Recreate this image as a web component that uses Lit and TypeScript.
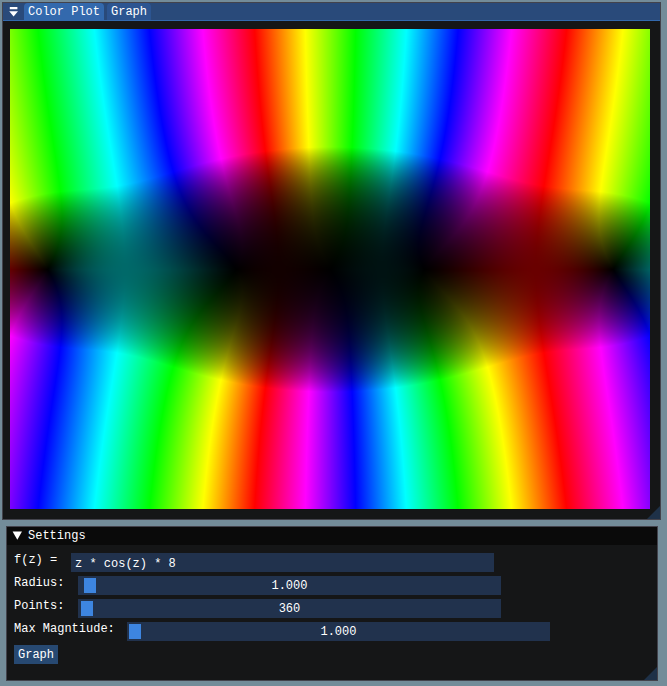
import { LitElement, html, css } from "lit";
import { customElement, property, query, state } from "lit/decorators.js";

const PLOT_WIDTH = 640;
const PLOT_HEIGHT = 480;
const PIXELS_PER_UNIT = 60;

/** Fully saturated HSV colour for a hue in [0, 6). */
function hueToRgb(h: number): [number, number, number] {
  const x = 1 - Math.abs((h % 2) - 1);
  if (h < 1) return [1, x, 0];
  if (h < 2) return [x, 1, 0];
  if (h < 3) return [0, 1, x];
  if (h < 4) return [0, x, 1];
  if (h < 5) return [x, 0, 1];
  return [1, 0, x];
}

/** Domain colouring of z * cos(z): argument as hue, magnitude as brightness. */
@customElement("color-plot")
export class ColorPlot extends LitElement {
  @property({ type: Number }) limit = 8;
  @query("canvas") canvas!: HTMLCanvasElement;

  static styles = css`
    :host {
      display: block;
    }
    .plot {
      display: block;
      width: 100%;
      height: auto;
    }
  `;

  updated() {
    const ctx = this.canvas.getContext("2d")!;
    const image = ctx.createImageData(PLOT_WIDTH, PLOT_HEIGHT);
    let i = 0;
    for (let row = 0; row < PLOT_HEIGHT; row++) {
      const y = (row - PLOT_HEIGHT / 2) / PIXELS_PER_UNIT;
      for (let col = 0; col < PLOT_WIDTH; col++) {
        const x = (col - PLOT_WIDTH / 2) / PIXELS_PER_UNIT;
        const cosRe = Math.cos(x) * Math.cosh(y);
        const cosIm = -Math.sin(x) * Math.sinh(y);
        const re = x * cosRe - y * cosIm;
        const im = x * cosIm + y * cosRe;
        const value = Math.min(1, Math.hypot(re, im) / this.limit);
        const hue = ((Math.atan2(im, re) / Math.PI) * 3 + 3) % 6;
        const [r, g, b] = hueToRgb(hue);
        image.data[i++] = r * value * 255;
        image.data[i++] = g * value * 255;
        image.data[i++] = b * value * 255;
        image.data[i++] = 255;
      }
    }
    ctx.putImageData(image, 0, 0);
  }

  render() {
    return html`<canvas
      class="plot"
      width=${PLOT_WIDTH}
      height=${PLOT_HEIGHT}
      role="img"
      aria-label="Color plot"
    ></canvas>`;
  }
}

interface Slider {
  id: string;
  label: string;
  size: string;
  max: number;
  value: number;
  digits: number;
}

@customElement("app-root")
export class AppRoot extends LitElement {
  @state() private sliders: Slider[] = [
    { id: "radius", label: "Radius:", size: "medium", max: 100, value: 1, digits: 3 },
    { id: "points", label: "Points:", size: "medium", max: 100000, value: 360, digits: 0 },
    { id: "magnitude", label: "Max Magntiude:", size: "long", max: 1000, value: 1, digits: 3 },
  ];

  static styles = css`
    :host {
      display: block;
      box-sizing: border-box;
      min-height: 100vh;
      padding: 2px 6px 5px 2px;
      background: #738c99;
      color: #fff;
      font: 12px/15px "Liberation Mono", monospace;
    }
    * {
      box-sizing: border-box;
    }
    button,
    input {
      margin: 0;
      border: 0;
      border-radius: 0;
      color: inherit;
      font: inherit;
    }
    .window {
      position: relative;
      border: 1px solid #43434c;
      background: #151617;
    }
    .window::after {
      content: "";
      position: absolute;
      right: 0;
      bottom: 0;
      width: 13px;
      height: 13px;
      background: #1e3148;
      clip-path: polygon(100% 0, 100% 100%, 0 100%);
    }
    .tabs {
      display: flex;
      gap: 3px;
      height: 18px;
      padding-left: 5px;
      border-bottom: 1px solid #3369ad;
      background: #294a7a;
    }
    .menu {
      display: flex;
      align-items: center;
      width: 13px;
      padding: 0;
      background: none;
    }
    .tab {
      height: 17px;
      padding: 2px 4px 0;
      border-radius: 4px 4px 0 0;
      background: #2c5591;
    }
    .tab.active {
      background: #3369ad;
    }
    .view {
      padding: 8px 10px 10px 7px;
    }
    .settings {
      margin: 6px 3px 0 4px;
    }
    .title {
      display: flex;
      align-items: center;
      gap: 6px;
      height: 18px;
      margin: 0;
      padding-left: 5px;
      background: #0a0a0a;
      font-size: 12px;
      font-weight: normal;
    }
    .form {
      display: flex;
      flex-direction: column;
      gap: 4px;
      padding: 8px 8px 16px 7px;
    }
    .row {
      display: flex;
      gap: 8px;
      height: 19px;
    }
    .label {
      flex: none;
      white-space: nowrap;
    }
    .short {
      width: 49px;
    }
    .medium {
      width: 56px;
    }
    .long {
      width: 105px;
    }
    .field {
      flex: none;
      width: 66.6%;
      height: 19px;
      background: #21324d;
    }
    .text {
      padding: 3px 4px 1px;
      outline: none;
    }
    .slider {
      display: grid;
    }
    .range,
    .value {
      grid-area: 1 / 1;
    }
    .range {
      appearance: none;
      width: 100%;
      height: 19px;
      padding: 0 2px;
      background: none;
    }
    .range::-webkit-slider-thumb {
      appearance: none;
      width: 12px;
      height: 15px;
      background: #3d85e0;
    }
    .value {
      padding-top: 3px;
      text-align: center;
      pointer-events: none;
    }
    .graph {
      align-self: flex-start;
      height: 19px;
      padding: 3px 4px 1px;
      background: #274972;
    }
  `;

  private change(index: number, event: Event) {
    const value = Number((event.target as HTMLInputElement).value);
    this.sliders = this.sliders.map((s, i) => (i === index ? { ...s, value } : s));
  }

  render() {
    return html`
      <section class="window">
        <div class="tabs">
          <button class="menu" aria-label="Window menu">
            <svg width="13" height="13" viewBox="0 0 13 13" fill="#fff">
              <path d="M1.8 2H9.4V4.2H1.8ZM1.2 6.2H10L5.6 11.6Z" />
            </svg>
          </button>
          <button class="tab active">Color Plot</button>
          <button class="tab">Graph</button>
        </div>
        <div class="view"><color-plot></color-plot></div>
      </section>
      <section class="window settings">
        <h2 class="title">
          <svg width="10" height="10" viewBox="0 0 10 10" fill="#fff">
            <path d="M0.6 0.4H10L5.3 8.8Z" />
          </svg>
          Settings
        </h2>
        <div class="form">
          <div class="row">
            <label class="label short" for="formula">f(z) =</label>
            <input class="field text" id="formula" value="z * cos(z) * 8" />
          </div>
          ${this.sliders.map(
            (s, i) => html`
              <div class="row">
                <label class="label ${s.size}" for=${s.id}>${s.label}</label>
                <div class="field slider">
                  <input
                    class="range"
                    id=${s.id}
                    type="range"
                    min="0"
                    max=${s.max}
                    .value=${String(s.value)}
                    @input=${(e: Event) => this.change(i, e)}
                  />
                  <output class="value" for=${s.id}>${s.value.toFixed(s.digits)}</output>
                </div>
              </div>
            `
          )}
          <button class="graph">Graph</button>
        </div>
      </section>
    `;
  }
}
